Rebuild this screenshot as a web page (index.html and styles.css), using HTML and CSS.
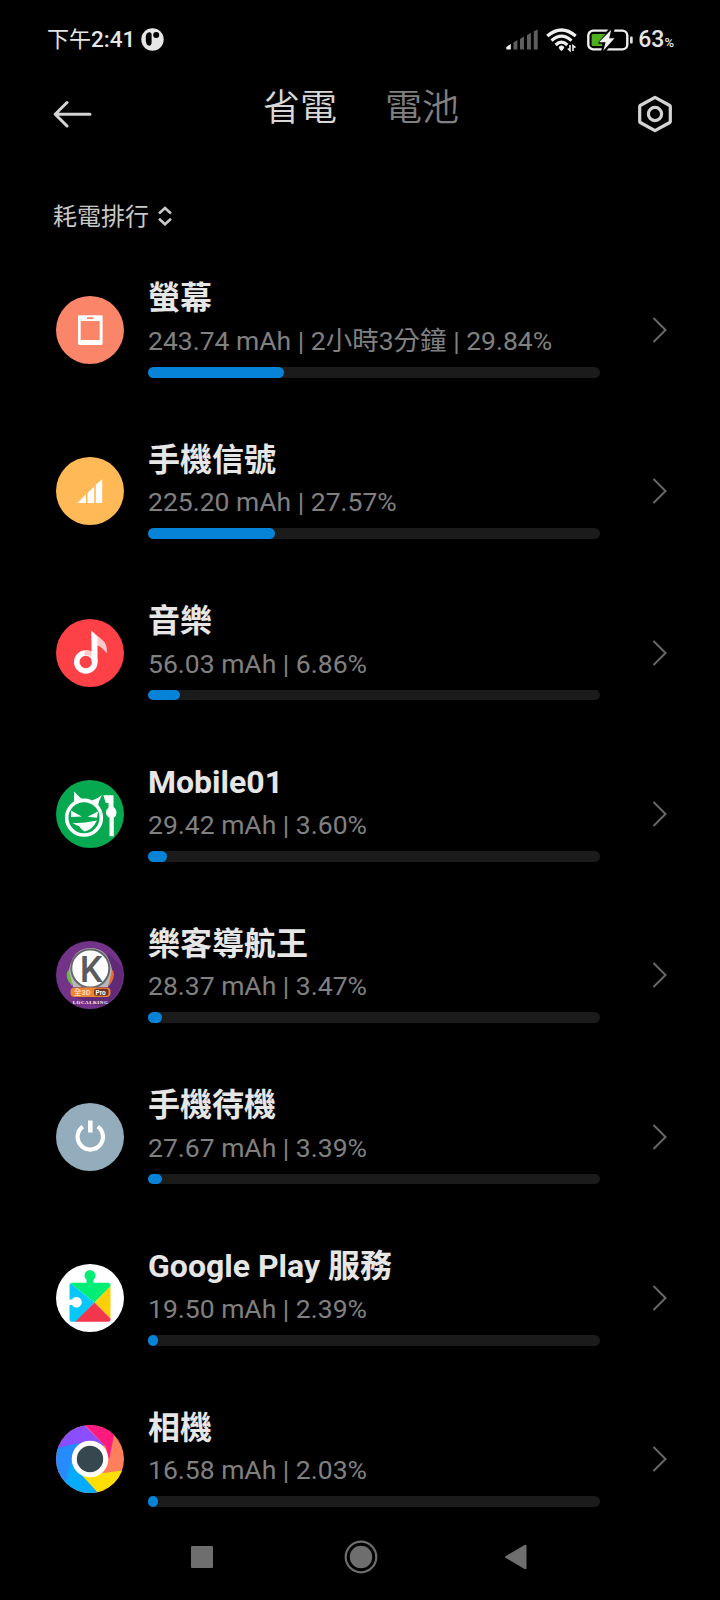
FILE: index.html
```html
<!DOCTYPE html>
<html lang="zh-Hant">
<head>
<meta charset="UTF-8" />
<meta name="viewport" content="width=device-width, initial-scale=1" />
<title>省電</title>
<link rel="stylesheet" href="styles.css">
</head>
<body>

<!-- STATUS BAR -->
<div class="status">
  <span class="time"><span class="ampm">下午</span>2:41</span>
  <svg class="notif" width="23" height="23" viewBox="0 0 23 23">
    <circle cx="11.5" cy="11.5" r="11.2" fill="#e6e6e6"/>
    <path d="M7.3 4.4Q10.600 3.800 10.600 7V14Q10.600 17.800 8 17.800Q5.300 17.400 4.800 13V8Q5 4.900 7.300 4.400Z" fill="#000"/>
    <circle cx="15.200" cy="7" r="3" fill="#000"/>
  </svg>
  <div class="status-right">
    <svg width="32" height="22" viewBox="0 0 32 22">
      <path d="M.3 20V18L4.800 15V20Q4.800 20.600 4.200 20.600H.9Q.3 20.600.3 20Z" fill="#f0f0f0"/>
      <path d="M7.500 13.500L11.400 11V20.600H7.500ZM14 10L18 7.500V20.600H14ZM21 6.200L24.900 3.700V20.600H21ZM27.800 2.300L31.700 .4V20.600H27.800Z" fill="#5e5e5e"/>
    </svg>
    <svg class="wifi" width="32" height="24" viewBox="0 0 32 24">
      <g fill="none" stroke="#f0f0f0" stroke-width="3.200">
        <path d="M1.300 8Q15.500 -4 29.700 8"/>
        <path d="M5.500 12.600Q15.500 3.800 25.500 12.600"/>
        <path d="M9.700 17Q15.500 11.300 21.300 17"/>
      </g>
      <path d="M15.500 17.500Q18 17.600 18.300 19.800Q17 22.300 15.500 23Q14 22.300 12.700 19.800Q13 17.600 15.500 17.500Z" fill="#f0f0f0"/>
      <path d="M24 17V22.600L21.800 20.500M27 23V17.600L29.500 19.600" fill="none" stroke="#f0f0f0" stroke-width="1.600"/>
    </svg>
    <svg class="battery" width="46" height="22" viewBox="0 0 46 22">
      <rect x="1.300" y="1.600" width="39" height="18.800" rx="5" fill="none" stroke="#f0f0f0" stroke-width="2.400"/>
      <path d="M22.500 -1L9.500 14.500H16L14 23H18.500L30 8.500H25.500L28 -1Z" fill="#000"/>
      <path d="M6 5H18.500L11.500 13V14.800H15.500L14.800 17H6Q4.600 17 4.600 15.500V6.500Q4.600 5 6 5Z" fill="#4caf1e"/>
      <path d="M24.200 .8L12 13.300H18.600L16.300 21.800L27.500 9.200H22.200Z" fill="#f0f0f0"/>
      <rect x="43" y="7.600" width="2.700" height="7" rx="1" fill="#e0e0e0"/>
    </svg>
    <span class="percent">63<small>%</small></span>
  </div>
</div>

<!-- HEADER -->
<div class="header">
  <svg class="back" width="40" height="28" viewBox="0 0 40 28" fill="none" stroke="#d4d4d4" stroke-width="3" stroke-linecap="round" stroke-linejoin="round">
    <path d="M14 2.500L2.200 14.300L14 26M2.200 14.300H37"/>
  </svg>
  <div class="tabs">
    <span class="tab active">省電</span>
    <span class="tab">電池</span>
  </div>
  <svg class="settings" width="36" height="38" viewBox="0 0 36 38" fill="none" stroke="#d4d4d4" stroke-width="3.200" stroke-linejoin="round">
    <path d="M18 2.300L32.800 10.500Q33.300 10.900 33.300 11.500V26.500Q33.300 27.100 32.800 27.500L18 35.700L3.200 27.500Q2.700 27.100 2.700 26.500V11.500Q2.700 10.900 3.200 10.500Z"/>
    <circle cx="18" cy="19" r="6.600"/>
  </svg>
</div>

<div class="sort">
  <span>耗電排行</span>
  <svg width="14" height="20" viewBox="0 0 14 20" fill="none" stroke="#c8c8c8" stroke-width="2.600">
    <path d="M1 7.500L7 2L13 7.500M1 12.800L7 18.300L13 12.800"/>
  </svg>
</div>

<!-- USAGE LIST -->
<div class="list">
  <div class="item">
    <svg class="icon" viewBox="0 0 68 68">
      <circle cx="34" cy="34" r="34" fill="#fb8568"/>
      <rect x="22" y="19.300" width="24.600" height="29.700" rx="1.200" fill="#fff"/>
      <rect x="24.700" y="25" width="19" height="19" fill="#fb8568"/>
      <rect x="31" y="21.200" width="6.500" height="1.800" fill="#fb8568"/>
    </svg>
    <div class="info">
      <div class="name">螢幕</div>
      <div class="detail">243.74 mAh | 2小時3分鐘 | 29.84%</div>
      <div class="bar"><div class="fill" style="width: 136px"></div></div>
    </div>
    <svg class="chevron" viewBox="0 0 16 26"><path d="M1.500 1L13.500 13L1.500 25"/></svg>
  </div>

  <div class="item">
    <svg class="icon" viewBox="0 0 68 68">
      <circle cx="34" cy="34" r="34" fill="#ffb957"/>
      <path d="M21.300 46L30 37.300V46ZM31.500 36L38.200 29.500V46H31.500ZM39.800 28L46.200 22V46H39.800Z" fill="#fff"/>
    </svg>
    <div class="info">
      <div class="name">手機信號</div>
      <div class="detail">225.20 mAh | 27.57%</div>
      <div class="bar"><div class="fill" style="width: 126.500px"></div></div>
    </div>
    <svg class="chevron" viewBox="0 0 16 26"><path d="M1.500 1L13.500 13L1.500 25"/></svg>
  </div>

  <div class="item">
    <svg class="icon" viewBox="0 0 68 68">
      <circle cx="34" cy="34" r="34" fill="#fd4147"/>
      <path d="M35.500 11.800L47.500 22Q52 26.500 50.500 34.500Q46.500 28 40.500 26L35.500 21Z" fill="#ffc9ca"/>
      <circle cx="29.800" cy="43" r="9" fill="none" stroke="#fff" stroke-width="5.600"/>
      <path d="M29.500 31.300Q33 31 35.700 32.700V38Q32 35.500 28 36Z" fill="#ffc9ca"/>
      <path d="M35.500 11.800L41.500 18.500V43H35.500Z" fill="#fff"/>
    </svg>
    <div class="info">
      <div class="name">音樂</div>
      <div class="detail">56.03 mAh | 6.86%</div>
      <div class="bar"><div class="fill" style="width: 32px"></div></div>
    </div>
    <svg class="chevron" viewBox="0 0 16 26"><path d="M1.500 1L13.500 13L1.500 25"/></svg>
  </div>

  <div class="item">
    <svg class="icon" viewBox="0 0 68 68">
      <circle cx="34" cy="34" r="34" fill="#06a850"/>
      <circle cx="28" cy="37.700" r="17.300" fill="none" stroke="#fff" stroke-width="3.600"/>
      <path d="M18 25Q18 17 18.200 11.500Q22.500 16.500 27 20ZM36 20.500Q42 18.500 46 15Q42.500 21 42 26Z" fill="#fff"/>
      <path d="M15 30.500L25.700 36.500L15 37ZM42 31.500L31.500 36.800L41 37.700ZM16.500 43.200Q30 43 41 40.500Q36 50.500 28.500 51.500Q25 49.500 23.500 46.500Z" fill="#fff"/>
      <path d="M47.300 15.300H57.500V27Q60.500 29 60.500 33Q60.500 36 57.800 37.800V56.300H53.500V37.800Q50 36 50 32.500Q50 29.500 52.500 27.500V23H49.800Z" fill="#fff"/>
    </svg>
    <div class="info">
      <div class="name">Mobile01</div>
      <div class="detail">29.42 mAh | 3.60%</div>
      <div class="bar"><div class="fill" style="width: 18.500px"></div></div>
    </div>
    <svg class="chevron" viewBox="0 0 16 26"><path d="M1.500 1L13.500 13L1.500 25"/></svg>
  </div>

  <div class="item">
    <svg class="icon" viewBox="0 0 68 68">
      <circle cx="34" cy="34" r="34" fill="#733389"/>
      <path d="M52 12L66 26Q71 52 45 66L16 55L52 46Z" fill="#602a77"/>
      <path d="M12 29Q8 36 16 45L18 34Z" fill="#6fb743"/>
      <path d="M57 29Q60 36 53 45L50 34Z" fill="#e96a34"/>
      <path d="M13 29Q17 7 34.500 7Q52 7 56 29L52 46H17Z" fill="#b8b8b9"/>
      <circle cx="34.300" cy="27.500" r="19" fill="#fff" stroke="#66686b" stroke-width="2"/>
      <text class="logo-k" x="35" y="40.500">K</text>
      <rect x="14.500" y="46.500" width="40" height="9.500" rx="4" fill="#f08436"/>
      <rect x="38" y="47.700" width="14.500" height="7" rx="2.500" fill="#70351f"/>
      <text class="logo-tag" x="18" y="54">全3D</text>
      <text class="logo-pro" x="39.500" y="53.500">Pro</text>
      <text class="logo-name" x="34.500" y="62.500">LOCALKING</text>
    </svg>
    <div class="info">
      <div class="name">樂客導航王</div>
      <div class="detail">28.37 mAh | 3.47%</div>
      <div class="bar"><div class="fill" style="width: 14px"></div></div>
    </div>
    <svg class="chevron" viewBox="0 0 16 26"><path d="M1.500 1L13.500 13L1.500 25"/></svg>
  </div>

  <div class="item">
    <svg class="icon" viewBox="0 0 68 68">
      <circle cx="34" cy="34" r="34" fill="#93adbd"/>
      <path d="M26.800 23.600A12.700 12.700 0 1 0 41.800 23.600" fill="none" stroke="#fff" stroke-width="4.200"/>
      <rect x="32" y="17.500" width="4.600" height="12" fill="#fff"/>
    </svg>
    <div class="info">
      <div class="name">手機待機</div>
      <div class="detail">27.67 mAh | 3.39%</div>
      <div class="bar"><div class="fill" style="width: 14px"></div></div>
    </div>
    <svg class="chevron" viewBox="0 0 16 26"><path d="M1.500 1L13.500 13L1.500 25"/></svg>
  </div>

  <div class="item">
    <svg class="icon" viewBox="0 0 68 68">
      <circle cx="34" cy="34" r="34" fill="#fff"/>
      <clipPath id="piece"><rect x="13.500" y="18.700" width="41" height="39" rx="2.500"/></clipPath>
      <g clip-path="url(#piece)">
        <path d="M13 18L38.500 38.500L19 59H13Z" fill="#08c8fb"/>
        <path d="M13 18H55V22L38.500 38.500Z" fill="#00ee76"/>
        <path d="M55 21.500L38.500 38.500L55 55Z" fill="#ffd00a"/>
        <path d="M18 59L38.500 38.500L55 55V59Z" fill="#f2364b"/>
      </g>
      <path d="M30.500 19.500V15.800A5.500 5.500 0 1 1 37.500 15.800V19.500Z" fill="#00ee76"/>
      <path d="M13 35.500H16A5.300 5.300 0 1 1 16 41H13Z" fill="#fff"/>
    </svg>
    <div class="info">
      <div class="name">Google Play 服務</div>
      <div class="detail">19.50 mAh | 2.39%</div>
      <div class="bar"><div class="fill" style="width: 9.500px"></div></div>
    </div>
    <svg class="chevron" viewBox="0 0 16 26"><path d="M1.500 1L13.500 13L1.500 25"/></svg>
  </div>

  <div class="item">
    <svg class="icon" viewBox="0 0 68 68">
      <clipPath id="lens"><circle cx="34" cy="34" r="34"/></clipPath>
      <g clip-path="url(#lens)">
        <rect width="68" height="68" fill="#ff7f5c"/>
        <path d="M28 -1L50 22L53 35L60 0Z" fill="#ff1a80"/>
        <path d="M0 0H28L48 20L34 34L0 25Z" fill="#8a4dff"/>
        <path d="M-2 24L22 18L34 34L8 58L-2 50Z" fill="#268bff"/>
        <path d="M17 30L9 60L20 70H42L34 50L22 42Z" fill="#06aaff"/>
        <path d="M22 46L44 70L70 60V45L48 48Z" fill="#ffdf00"/>
      </g>
      <circle cx="34" cy="34" r="18.300" fill="#fff"/>
      <circle cx="34" cy="34" r="13.200" fill="#37474f"/>
    </svg>
    <div class="info">
      <div class="name">相機</div>
      <div class="detail">16.58 mAh | 2.03%</div>
      <div class="bar"><div class="fill" style="width: 9.500px"></div></div>
    </div>
    <svg class="chevron" viewBox="0 0 16 26"><path d="M1.500 1L13.500 13L1.500 25"/></svg>
  </div>
</div>

<!-- NAVIGATION BAR -->
<div class="nav">
  <svg width="34" height="34" viewBox="0 0 34 34"><rect x="6" y="6" width="22" height="22" rx="1" fill="#6e6e6e"/></svg>
  <svg class="home" width="34" height="34" viewBox="0 0 34 34">
    <circle cx="17" cy="17" r="15.300" fill="none" stroke="#6e6e6e" stroke-width="2.200"/>
    <circle cx="17" cy="17" r="11.200" fill="#6e6e6e"/>
  </svg>
  <svg width="34" height="34" viewBox="0 0 34 34"><path d="M7 17L26.500 5.700V28.300Z" fill="#6e6e6e" stroke="#6e6e6e" stroke-width="2" stroke-linejoin="round"/></svg>
</div>

</body>
</html>
```

FILE: styles.css
```css
* {
  box-sizing: border-box;
  margin: 0;
  padding: 0;
}
body {
  display: flex;
  flex-direction: column;
  width: 720px;
  height: 1600px;
  background: #000;
  color: #e6e6e6;
  font-family: Roboto, "Noto Sans CJK TC", sans-serif;
  overflow: hidden;
}
svg {
  display: block;
  flex: none;
}

/* STATUS BAR */
.status {
  display: flex;
  align-items: center;
  height: 79px;
  padding: 0 46px 0 47px;
}
.time {
  font-size: 22.5px;
  font-weight: 500;
  line-height: 30px;
}
.ampm {
  font-size: 22px;
  font-weight: 400;
}
.notif {
  margin-left: 6px;
}
.status-right {
  display: flex;
  align-items: center;
  margin-left: auto;
}
.wifi {
  margin-left: 8px;
}
.battery {
  margin-left: 9px;
}
.percent {
  margin-left: 5px;
  font-size: 23px;
  font-weight: 500;
}
.percent small {
  font-size: 13px;
}

/* HEADER */
.header {
  display: flex;
  align-items: center;
  height: 70px;
  padding: 0 47px 0 53px;
}
.tabs {
  display: flex;
  gap: 48px;
  margin: -11px auto 0 170px;
}
.tab {
  font-size: 37px;
  font-weight: 350;
  line-height: 52px;
  color: #808080;
}
.tab.active {
  color: #d8d8d8;
}

.sort {
  display: flex;
  align-items: center;
  gap: 9px;
  height: 100.3px;
  padding: 34px 0 0 53px;
  font-size: 24px;
  color: #c8c8c8;
}
.sort span {
  margin-bottom: 3px;
}

/* USAGE LIST */
.list {
  flex: 1;
  min-height: 0;
  overflow: hidden;
}
.item {
  display: flex;
  align-items: center;
  height: 161.33px;
  padding: 0 52px 0 56px;
}
.icon {
  width: 68px;
  height: 68px;
}
.info {
  width: 452px;
  margin: 0 auto 5.8px 24px;
}
.name {
  height: 44px;
  line-height: 44px;
  font-size: 32px;
  font-weight: 700;
  white-space: nowrap;
}
.detail {
  height: 38px;
  margin-top: 1.6px;
  line-height: 38px;
  font-size: 26.5px;
  color: #808080;
  white-space: nowrap;
}
.bar {
  height: 10.7px;
  margin-top: 7.2px;
  border-radius: 6px;
  background: #1b1b1b;
}
.fill {
  height: 100%;
  border-radius: 6px;
  background: #0682d6;
}
.chevron {
  width: 16px;
  height: 26px;
  fill: none;
  stroke: #686868;
  stroke-width: 2;
}

/* LOCALKING ICON TEXT */
.logo-k {
  font: 500 36px Roboto, sans-serif;
  fill: #595b5f;
  text-anchor: middle;
}
.logo-tag {
  font: 700 7.5px Roboto, "Noto Sans CJK TC", sans-serif;
  fill: #ffd9b5;
}
.logo-pro {
  font: 700 6.5px Roboto, sans-serif;
  fill: #fff;
}
.logo-name {
  font: 700 5px "Liberation Serif", serif;
  letter-spacing: 0.5px;
  fill: #fff;
  text-anchor: middle;
}

/* NAVIGATION BAR */
.nav {
  display: flex;
  align-items: center;
  justify-content: space-between;
  height: 86px;
  padding: 0 187px 0 185px;
}
.home {
  margin-left: 3px;
}
```
